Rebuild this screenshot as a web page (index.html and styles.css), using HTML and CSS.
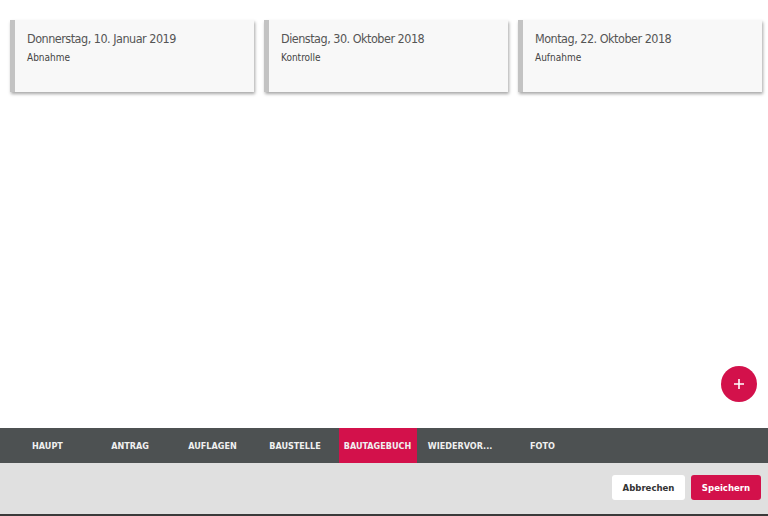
FILE: index.html
```html
<!DOCTYPE html>
<html lang="de">
<head>
<meta charset="utf-8">
<title>Bautagebuch</title>
<link rel="stylesheet" href="styles.css">
</head>
<body>
<div class="app">
  <main class="content">
    <div class="cards">
      <div class="card">
        <div class="card-title">Donnerstag, 10. Januar 2019</div>
        <div class="card-sub">Abnahme</div>
      </div>
      <div class="card">
        <div class="card-title">Dienstag, 30. Oktober 2018</div>
        <div class="card-sub">Kontrolle</div>
      </div>
      <div class="card">
        <div class="card-title">Montag, 22. Oktober 2018</div>
        <div class="card-sub">Aufnahme</div>
      </div>
    </div>
    <button class="fab" aria-label="Hinzufügen">
      <svg width="12" height="12" viewBox="0 0 12 12"><path d="M6 1v10M1 6h10" stroke="#fff" stroke-width="1.6"/></svg>
    </button>
  </main>
  <nav class="tabs">
    <div class="tab">HAUPT</div>
    <div class="tab">ANTRAG</div>
    <div class="tab">AUFLAGEN</div>
    <div class="tab">BAUSTELLE</div>
    <div class="tab active">BAUTAGEBUCH</div>
    <div class="tab">WIEDERVOR...</div>
    <div class="tab">FOTO</div>
  </nav>
  <footer class="actions">
    <button class="btn btn-cancel">Abbrechen</button>
    <button class="btn btn-save">Speichern</button>
  </footer>
</div>
</body>
</html>
```
FILE: styles.css
```css
html, body {
  margin: 0;
  padding: 0;
  background: #fff;
}
body {
  font-family: "DejaVu Sans Condensed", "DejaVu Sans", sans-serif;
}
.app {
  height: 516px;
  display: flex;
  flex-direction: column;
}
.content {
  flex: 1;
  position: relative;
  padding: 20px 6px 0 10px;
}
.cards {
  display: grid;
  grid-template-columns: repeat(3, 244px);
  gap: 10px;
}
.card {
  height: 72px;
  box-sizing: border-box;
  background: #f8f8f8;
  border-left: 5px solid #c3c3c3;
  box-shadow: 1px 2px 3px rgba(0, 0, 0, 0.35);
  padding: 11px 12px;
}
.card-title {
  font-size: 12.5px;
  letter-spacing: -0.5px;
  color: #555;
  line-height: 16px;
}
.card-sub {
  font-size: 10px;
  color: #444;
  margin-top: 4px;
  line-height: 13px;
}
.fab {
  position: absolute;
  right: 11px;
  bottom: 26px;
  width: 36px;
  height: 36px;
  border-radius: 50%;
  border: none;
  background: #d3114b;
  display: flex;
  align-items: center;
  justify-content: center;
  padding: 0;
}
.tabs {
  height: 35px;
  background: #4d5152;
  display: flex;
  gap: 4.5px;
  padding-left: 8.5px;
}
.tab {
  width: 78px;
  display: flex;
  align-items: center;
  justify-content: center;
  color: #f0f0f0;
  font-size: 9px;
  font-weight: bold;
  white-space: nowrap;
}
.tab.active {
  background: #d3114b;
}
.actions {
  height: 53px;
  box-sizing: border-box;
  background: #e0e0e0;
  border-bottom: 2px solid #3a3a3a;
  display: flex;
  justify-content: flex-end;
  align-items: center;
  gap: 6px;
  padding: 0 7px 2px 0;
}
.btn {
  height: 25px;
  border: none;
  border-radius: 3px;
  font-family: inherit;
  font-size: 9.5px;
  font-weight: bold;
  padding: 0;
}
.btn-cancel {
  width: 73px;
  background: #fff;
  color: #333;
}
.btn-save {
  width: 70px;
  background: #d3114b;
  color: #fff;
}
```
